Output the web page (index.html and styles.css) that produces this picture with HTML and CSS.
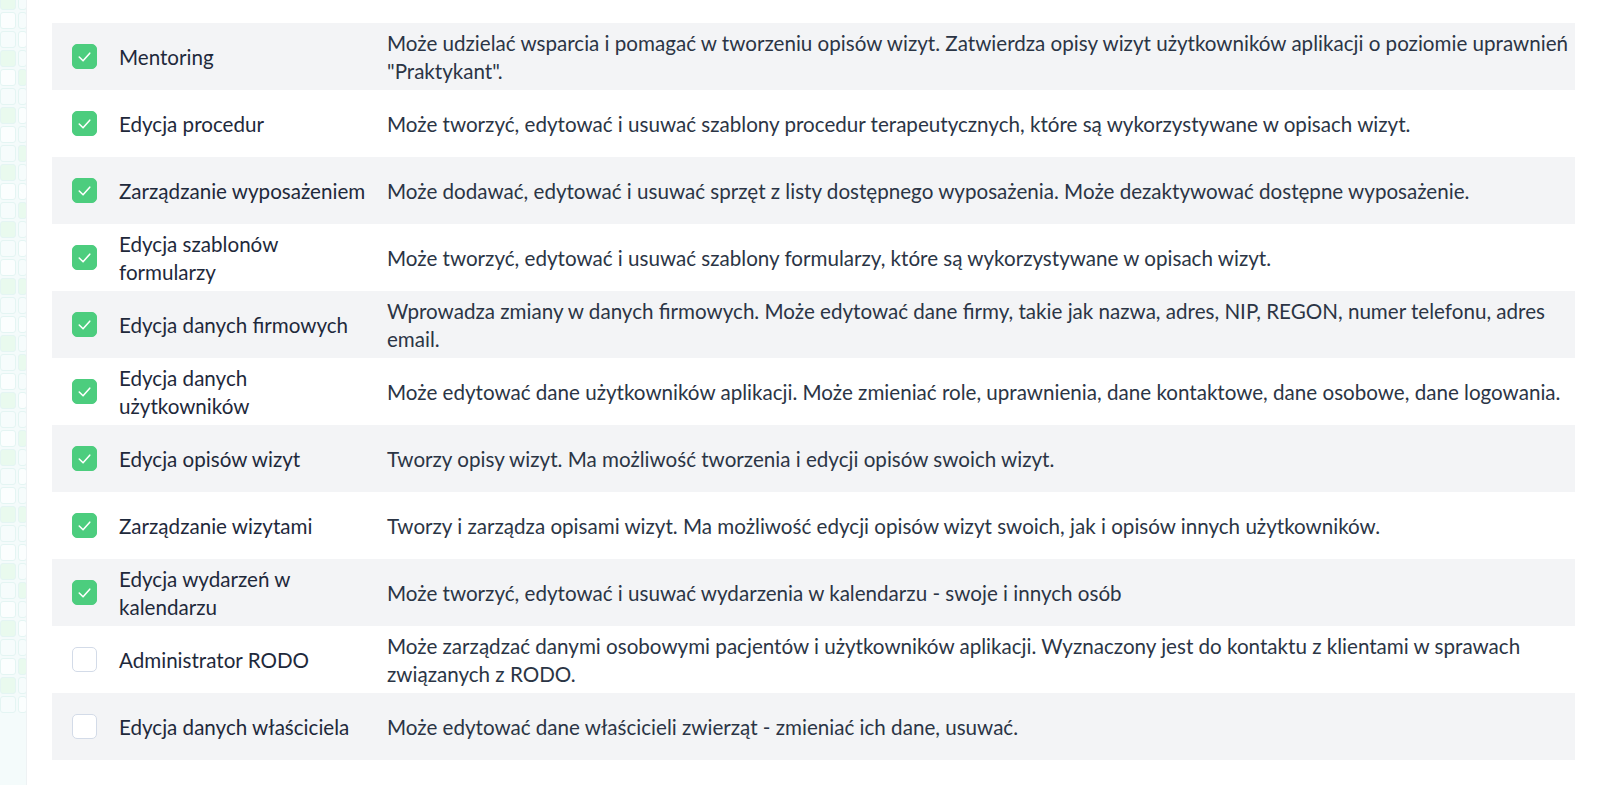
FILE: index.html
```html
<!DOCTYPE html>
<html lang="pl">
<head>
<meta charset="utf-8">
<title>Uprawnienia</title>
<link rel="stylesheet" href="styles.css">
</head>
<body>
<div class="page">
  <aside class="backdrop">
    <div class="cell c1"></div><div class="cell c0"></div>
    <div class="cell c2"></div><div class="cell c0"></div>
    <div class="cell c0"></div><div class="cell c2"></div>
    <div class="cell c1"></div><div class="cell c0"></div>
    <div class="cell c2"></div><div class="cell c1"></div>
    <div class="cell c0"></div><div class="cell c0"></div>
    <div class="cell c1"></div><div class="cell c2"></div>
    <div class="cell c2"></div><div class="cell c0"></div>
    <div class="cell c0"></div><div class="cell c1"></div>
    <div class="cell c1"></div><div class="cell c0"></div>
    <div class="cell c2"></div><div class="cell c2"></div>
    <div class="cell c0"></div><div class="cell c1"></div>
    <div class="cell c1"></div><div class="cell c0"></div>
    <div class="cell c0"></div><div class="cell c2"></div>
    <div class="cell c2"></div><div class="cell c0"></div>
    <div class="cell c1"></div><div class="cell c1"></div>
    <div class="cell c0"></div><div class="cell c0"></div>
    <div class="cell c2"></div><div class="cell c2"></div>
    <div class="cell c1"></div><div class="cell c0"></div>
    <div class="cell c0"></div><div class="cell c1"></div>
    <div class="cell c2"></div><div class="cell c0"></div>
    <div class="cell c1"></div><div class="cell c2"></div>
    <div class="cell c0"></div><div class="cell c0"></div>
    <div class="cell c2"></div><div class="cell c1"></div>
    <div class="cell c1"></div><div class="cell c0"></div>
    <div class="cell c0"></div><div class="cell c2"></div>
    <div class="cell c2"></div><div class="cell c0"></div>
    <div class="cell c1"></div><div class="cell c1"></div>
    <div class="cell c0"></div><div class="cell c0"></div>
    <div class="cell c2"></div><div class="cell c2"></div>
    <div class="cell c1"></div><div class="cell c0"></div>
    <div class="cell c0"></div><div class="cell c1"></div>
    <div class="cell c2"></div><div class="cell c0"></div>
    <div class="cell c1"></div><div class="cell c2"></div>
    <div class="cell c0"></div><div class="cell c0"></div>
    <div class="cell c2"></div><div class="cell c1"></div>
    <div class="cell c1"></div><div class="cell c0"></div>
    <div class="cell c0"></div><div class="cell c2"></div>
  </aside>
  <main class="content">
    <div class="perms">
      <div class="row">
        <span class="check on"><svg viewBox="0 0 24 24"><path d="M6.5 12.5l4 4 7-8"/></svg></span>
        <span class="label">Mentoring</span>
        <span class="desc">Może udzielać wsparcia i pomagać w tworzeniu opisów wizyt. Zatwierdza opisy wizyt użytkowników aplikacji o poziomie uprawnień "Praktykant".</span>
      </div>
      <div class="row">
        <span class="check on"><svg viewBox="0 0 24 24"><path d="M6.5 12.5l4 4 7-8"/></svg></span>
        <span class="label">Edycja procedur</span>
        <span class="desc">Może tworzyć, edytować i usuwać szablony procedur terapeutycznych, które są wykorzystywane w opisach wizyt.</span>
      </div>
      <div class="row">
        <span class="check on"><svg viewBox="0 0 24 24"><path d="M6.5 12.5l4 4 7-8"/></svg></span>
        <span class="label">Zarządzanie wyposażeniem</span>
        <span class="desc">Może dodawać, edytować i usuwać sprzęt z listy dostępnego wyposażenia. Może dezaktywować dostępne wyposażenie.</span>
      </div>
      <div class="row">
        <span class="check on"><svg viewBox="0 0 24 24"><path d="M6.5 12.5l4 4 7-8"/></svg></span>
        <span class="label">Edycja szablonów formularzy</span>
        <span class="desc">Może tworzyć, edytować i usuwać szablony formularzy, które są wykorzystywane w opisach wizyt.</span>
      </div>
      <div class="row">
        <span class="check on"><svg viewBox="0 0 24 24"><path d="M6.5 12.5l4 4 7-8"/></svg></span>
        <span class="label">Edycja danych firmowych</span>
        <span class="desc">Wprowadza zmiany w danych firmowych. Może edytować dane firmy, takie jak nazwa, adres, NIP, REGON, numer telefonu, adres email.</span>
      </div>
      <div class="row">
        <span class="check on"><svg viewBox="0 0 24 24"><path d="M6.5 12.5l4 4 7-8"/></svg></span>
        <span class="label">Edycja danych użytkowników</span>
        <span class="desc">Może edytować dane użytkowników aplikacji. Może zmieniać role, uprawnienia, dane kontaktowe, dane osobowe, dane logowania.</span>
      </div>
      <div class="row">
        <span class="check on"><svg viewBox="0 0 24 24"><path d="M6.5 12.5l4 4 7-8"/></svg></span>
        <span class="label">Edycja opisów wizyt</span>
        <span class="desc">Tworzy opisy wizyt. Ma możliwość tworzenia i edycji opisów swoich wizyt.</span>
      </div>
      <div class="row">
        <span class="check on"><svg viewBox="0 0 24 24"><path d="M6.5 12.5l4 4 7-8"/></svg></span>
        <span class="label">Zarządzanie wizytami</span>
        <span class="desc">Tworzy i zarządza opisami wizyt. Ma możliwość edycji opisów wizyt swoich, jak i opisów innych użytkowników.</span>
      </div>
      <div class="row">
        <span class="check on"><svg viewBox="0 0 24 24"><path d="M6.5 12.5l4 4 7-8"/></svg></span>
        <span class="label">Edycja wydarzeń w kalendarzu</span>
        <span class="desc">Może tworzyć, edytować i usuwać wydarzenia w kalendarzu - swoje i innych osób</span>
      </div>
      <div class="row">
        <span class="check"></span>
        <span class="label">Administrator RODO</span>
        <span class="desc">Może zarządzać danymi osobowymi pacjentów i użytkowników aplikacji. Wyznaczony jest do kontaktu z klientami w sprawach związanych z RODO.</span>
      </div>
      <div class="row">
        <span class="check"></span>
        <span class="label">Edycja danych właściciela</span>
        <span class="desc">Może edytować dane właścicieli zwierząt - zmieniać ich dane, usuwać.</span>
      </div>
    </div>
  </main>
</div>
</body>
</html>
```

FILE: styles.css
```css
* { box-sizing: border-box; }
html, body { margin: 0; padding: 0; }
body {
  background: #ffffff;
  font-family: Lato, "Open Sans", sans-serif;
  color: #1f2937;
  overflow: hidden;
}
.page {
  display: flex;
  height: 785px;
}
.backdrop {
  width: 27px;
  flex: none;
  display: grid;
  grid-template-columns: 16px 9px;
  grid-auto-rows: 17px;
  gap: 2px;
  align-content: start;
  margin-top: -7px;
  background: #f4fbfb;
  border-right: 1px solid #eef2f4;
  overflow: hidden;
}
.cell {
  border-radius: 3px;
  border: 1px solid #e4f5f3;
}
.c0 { background: #f6fcfc; }
.c1 { background: #e9faee; }
.c2 { background: #fbfefe; }
.content {
  flex: 1;
  padding: 23px 25px 0 25px;
}
.perms {
  display: flex;
  flex-direction: column;
}
.row {
  display: grid;
  grid-template-columns: 47px 268px 1fr;
  align-items: center;
  height: 67px;
  padding-left: 20px;
  font-size: 20.6px;
  line-height: 28px;
}
.row:nth-child(odd) { background: #f3f4f6; }
.check {
  width: 25px;
  height: 25px;
  border-radius: 5px;
  border: 1px solid #d3dbe8;
  background: #ffffff;
  display: flex;
  align-items: center;
  justify-content: center;
}
.check.on {
  background: #4ccd7e;
  border-color: #4ccd7e;
}
.check svg {
  width: 23px;
  height: 23px;
  fill: none;
  stroke: #ffffff;
  stroke-width: 1.6;
  stroke-linecap: round;
  stroke-linejoin: round;
}
.label {
  color: #1e293b;
  padding-right: 8px;
}
.desc {
  color: #2b3545;
}
```
